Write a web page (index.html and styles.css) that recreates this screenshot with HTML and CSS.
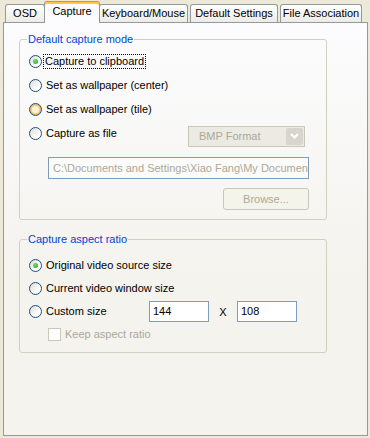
FILE: index.html
```html
<!DOCTYPE html>
<html lang="en">

<head>
    <meta charset="UTF-8">
    <title>Options - Capture</title>
    <link rel="stylesheet" href="styles.css">
</head>

<body>
    <div class="dialog">
        <div class="tabs">
            <div class="tab tab-osd">OSD</div>
            <div class="tab tab-capture active">Capture</div>
            <div class="tab tab-keys">Keyboard/Mouse</div>
            <div class="tab tab-defaults">Default Settings</div>
            <div class="tab tab-assoc">File Association</div>
        </div>

        <div class="panel">
            <fieldset class="group group-mode">
                <legend>Default capture mode</legend>
                <div class="row">
                    <span class="radio checked"></span>
                    <span class="label focused">Capture to clipboard</span>
                </div>
                <div class="row">
                    <span class="radio"></span>
                    <span class="label">Set as wallpaper (center)</span>
                </div>
                <div class="row">
                    <span class="radio hover"></span>
                    <span class="label">Set as wallpaper (tile)</span>
                </div>
                <div class="row">
                    <span class="radio"></span>
                    <span class="label label-file">Capture as file</span>
                    <div class="select disabled">
                        <span class="select-text">BMP Format</span>
                        <span class="select-btn">
                            <svg width="9" height="6" viewBox="0 0 9 6">
                                <path d="M1 1 L4.5 4.5 L8 1" fill="none" stroke="#fff" stroke-width="2" />
                            </svg>
                        </span>
                    </div>
                </div>
                <div class="path-box">C:\Documents and Settings\Xiao Fang\My Documents</div>
                <div class="btn-row">
                    <button class="btn" disabled>Browse...</button>
                </div>
            </fieldset>

            <fieldset class="group group-ratio">
                <legend>Capture aspect ratio</legend>
                <div class="row row-tight">
                    <span class="radio checked"></span>
                    <span class="label">Original video source size</span>
                </div>
                <div class="row row-tight">
                    <span class="radio"></span>
                    <span class="label">Current video window size</span>
                </div>
                <div class="row row-tight">
                    <span class="radio"></span>
                    <span class="label label-custom">Custom size</span>
                    <div class="size-box">144</div>
                    <span class="times">X</span>
                    <div class="size-box">108</div>
                </div>
                <div class="row row-tight row-check">
                    <span class="check"></span>
                    <span class="label muted">Keep aspect ratio</span>
                </div>
            </fieldset>
        </div>
    </div>
</body>

</html>
```

FILE: styles.css
```css
body {
    margin: 0;
    padding: 0;
    background-color: #ece9d8;
    font-family: "Liberation Sans", Arial, sans-serif;
    font-size: 11px;
    color: #000000;
}

.dialog {
    width: 365px;
    padding: 0 2px 0 3px;
}

/* tab strip */

.tabs {
    display: flex;
    align-items: flex-end;
    height: 22px;
    padding-left: 2px;
}

.tab {
    box-sizing: border-box;
    height: 18px;
    line-height: 16px;
    text-align: center;
    border: 1px solid #919b9c;
    border-bottom: none;
    border-radius: 3px 3px 0 0;
    background: linear-gradient(#ffffff, #ecebe6);
    white-space: nowrap;
}

.tab-osd {
    width: 40px;
}

.tab-capture {
    width: 56px;
    margin: 0 -1px -1px -1px;
}

.tab-keys {
    width: 89px;
}

.tab-defaults {
    width: 88px;
    margin-left: 2px;
}

.tab-assoc {
    width: 82px;
    margin-left: 2px;
}

.tab.active {
    height: 22px;
    line-height: 18px;
    z-index: 1;
    border-top: 1px solid #e68b2c;
    box-shadow: inset 0 2px 0 #ffc73c;
    background: #fcfcfe;
}

/* page */

.panel {
    box-sizing: border-box;
    height: 414px;
    border: 1px solid #919b9c;
    background: linear-gradient(#fcfcfe, #f4f3ee 60%);
    padding: 10px 0 0 15px;
}

.group {
    box-sizing: border-box;
    width: 308px;
    margin: 0;
    border: 1px solid #d0d0bf;
    border-radius: 3px;
    padding: 3px 17px 9px 9px;
}

.group legend {
    color: #0046d5;
    line-height: 13px;
    padding: 0 1px;
    margin-left: -2px;
}

.group-ratio {
    margin-top: 13px;
    padding-top: 8px;
    padding-bottom: 6px;
}

.row {
    display: flex;
    align-items: center;
    height: 24px;
}

.row-tight {
    height: 23px;
}

.label {
    margin-left: 4px;
    line-height: 13px;
    white-space: nowrap;
}

.label.focused {
    margin-left: 2px;
    padding: 0 1px;
    outline: 1px dotted #000000;
}

.label-file {
    width: 142px;
}

.label-custom {
    width: 103px;
}

.muted {
    color: #aca899;
}

/* radio buttons */

.radio {
    box-sizing: border-box;
    flex: none;
    width: 13px;
    height: 13px;
    border-radius: 50%;
    border: 1px solid #1c5180;
    background: linear-gradient(135deg, #dcd9d0, #ffffff 70%);
    display: flex;
    align-items: center;
    justify-content: center;
}

.radio.hover {
    box-shadow: inset 0 0 0 1px #f5b547, inset 0 0 0 2px #fbd27e;
    background: #fdf3dc;
}

.radio.checked::after {
    content: "";
    width: 5px;
    height: 5px;
    border-radius: 50%;
    background: radial-gradient(circle at 35% 35%, #6fe36b, #21a121);
}

.check {
    box-sizing: border-box;
    flex: none;
    width: 13px;
    height: 13px;
    margin-left: 19px;
    border: 1px solid #cac8bb;
    background: #ffffff;
}

/* format dropdown */

.select {
    box-sizing: border-box;
    display: flex;
    width: 117px;
    height: 21px;
    margin-top: 6px;
    border: 1px solid #c9c7ba;
    background: #ebeae3;
    padding: 1px;
}

.select-text {
    flex: 1;
    color: #aca899;
    line-height: 17px;
    padding-left: 9px;
}

.select-btn {
    width: 17px;
    border-radius: 2px;
    background: #d8d6cc;
    display: flex;
    align-items: center;
    justify-content: center;
}

/* path and buttons */

.path-box {
    box-sizing: border-box;
    width: 261px;
    height: 22px;
    margin: 12px 0 0 19px;
    border: 1px solid #7f9db9;
    background: #fbfbfa;
    color: #aca899;
    line-height: 20px;
    padding-left: 4px;
    white-space: nowrap;
    overflow: hidden;
}

.btn-row {
    display: flex;
    justify-content: flex-end;
    margin-top: 9px;
}

.btn {
    box-sizing: border-box;
    width: 86px;
    height: 22px;
    border: 1px solid #c9c7ba;
    border-radius: 3px;
    background: #f5f4ea;
    color: #aca899;
    font-family: inherit;
    font-size: 11px;
    padding: 0;
}

/* custom size fields */

.size-box {
    box-sizing: border-box;
    width: 60px;
    height: 21px;
    border: 1px solid #7f9db9;
    background: #ffffff;
    line-height: 19px;
    padding-left: 3px;
}

.times {
    width: 28px;
    text-align: center;
}
```
